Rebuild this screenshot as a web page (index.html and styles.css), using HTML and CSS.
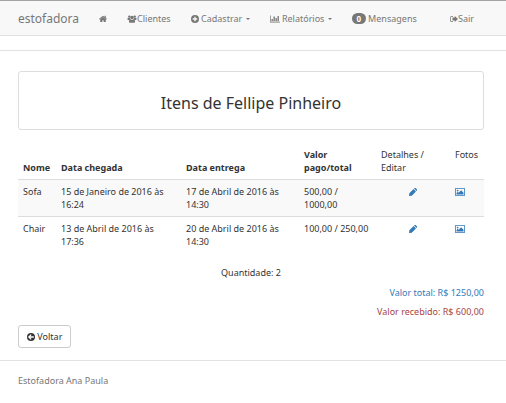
FILE: index.html
```html
<!DOCTYPE html>
<html lang="pt-BR">
<head>
<meta charset="utf-8">
<title>Estofadora</title>
<link rel="stylesheet" href="styles.css">
</head>
<body>
<svg class="sprite" aria-hidden="true">
  <symbol id="home" viewBox="70 160 1650 1500"><path d="M1472 992v480q0 26-19 45t-45 19h-384v-384h-256v384h-384q-26 0-45-19t-19-45v-480q0-1 .5-3t.5-3l575-474 575 474q1 2 1 6zm223-69l-62 74q-8 9-21 11h-3q-13 0-21-7l-692-577-692 577q-12 8-24 7-13-2-21-11l-62-74q-8-10-7-23.5t11-21.5l719-599q32-26 76-26t76 26l244 204v-195q0-14 9-23t23-9h192q14 0 23 9t9 23v408l219 182q10 8 11 21.5t-7 23.5z"/></symbol>
  <symbol id="users" viewBox="0 0 20 18"><circle cx="4" cy="3.6" r="2.7"/><circle cx="16" cy="3.6" r="2.7"/><circle cx="10" cy="5.6" r="3.9"/><path d="M0 10V8.500Q0 5.500 1.500 5.500Q4 7.500 5.600 6.500Q5.500 8.500 6.500 9.800Q4.500 10 3.500 11.300H1.600Q0 11.300 0 10zM20 10V8.500Q20 5.500 18.500 5.500Q16 7.500 14.400 6.500Q14.500 8.500 13.500 9.800Q15.500 10 16.500 11.300H18.400Q20 11.300 20 10zM6.500 9.500Q10 12 13.500 9.500Q17 9.500 17 15Q17 17.500 14.500 17.500H5.500Q3 17.500 3 15Q3 9.500 6.500 9.500z"/></symbol>
  <symbol id="plus" viewBox="1 1 14 14"><path fill-rule="evenodd" d="M8 1a7 7 0 1 0 0 14A7 7 0 0 0 8 1zM6.800 4h2.400v2.800H12v2.400H9.200V12H6.800V9.200H4V6.800h2.800z"/></symbol>
  <symbol id="chart" viewBox="0 0 20 16"><path d="M0 1h1.400v12.600H20V15H0zM3 8h2.700v4.500H3zM7 3h2.700v9.500H7zM11 6h2.700v6.500H11zM15 2h2.700v10.500H15z"/></symbol>
  <symbol id="exit" viewBox="0 1 16 14"><path d="M6 2v1.400H3.300Q1.700 3.400 1.700 5v6Q1.700 12.600 3.300 12.600H6V14H3.200Q.3 14 .3 11V5Q.3 2 3.200 2zM9.500 2L16 8 9.500 14V10.800H5V5.200h4.500z"/></symbol>
  <symbol id="pencil" viewBox="1 1 14 14"><path d="M1 15l.6-4.800 7.400-7.400 4.200 4.200-7.400 7.400zM9.900 2l.8-.8q1-.8 1.900 0l2.200 2.200q.8.900 0 1.900l-.8.800z"/></symbol>
  <symbol id="image" viewBox="0 0 20 16"><path fill-rule="evenodd" d="M1.500 0h17Q20 0 20 1.500v13Q20 16 18.500 16h-17Q0 16 0 14.500v-13Q0 0 1.500 0zM1.600 1.600v12.800h16.800V1.600z"/><circle cx="5.200" cy="5.200" r="1.800"/><path d="M3 13V10.200l2.500-2.500L7.300 9.500l4.900-4.900 4.800 4.700V13z"/></symbol>
  <symbol id="back" viewBox="1 1 14 14"><path fill-rule="evenodd" d="M8 1a7 7 0 1 0 0 14A7 7 0 0 0 8 1zM2.600 8l4.900-4.800 1.500 1.500-2.100 2.200h6v2.200h-6L9 11.300l-1.500 1.500z"/></symbol>
</svg>

<nav class="navbar">
  <a class="brand" href="#">estofadora</a>
  <a class="nav-link" href="#" aria-label="Início"><svg class="icon"><use href="#home"/></svg></a>
  <a class="nav-link" href="#"><svg class="icon wide"><use href="#users"/></svg>Clientes</a>
  <a class="nav-link" href="#"><svg class="icon"><use href="#plus"/></svg>&nbsp;Cadastrar <span class="caret"></span></a>
  <a class="nav-link" href="#"><svg class="icon wide"><use href="#chart"/></svg>&nbsp;Relatórios <span class="caret"></span></a>
  <a class="nav-link" href="#"><span class="badge">0</span>&nbsp;Mensagens</a>
  <a class="nav-link right" href="#"><svg class="icon"><use href="#exit"/></svg>Sair</a>
</nav>
<hr class="rule">

<main class="container">
  <header class="well"><h1>Itens de Fellipe Pinheiro</h1></header>

  <table class="items">
    <colgroup><col class="c-name"><col class="c-in"><col class="c-out"><col class="c-value"><col class="c-edit"><col class="c-photo"></colgroup>
    <thead>
      <tr><th>Nome</th><th>Data chegada</th><th>Data entrega</th><th>Valor pago/total</th><td>Detalhes / Editar</td><td>Fotos</td></tr>
    </thead>
    <tbody>
      <tr>
        <td>Sofa</td><td>15 de Janeiro de 2016 às 16:24</td><td>17 de Abril de 2016 às 14:30</td><td>500,00 / 1000,00</td>
        <td class="center"><a href="#" aria-label="Editar"><svg class="icon"><use href="#pencil"/></svg></a></td>
        <td><a href="#" aria-label="Fotos"><svg class="icon wide"><use href="#image"/></svg></a></td>
      </tr>
      <tr>
        <td>Chair</td><td>13 de Abril de 2016 às 17:36</td><td>20 de Abril de 2016 às 14:30</td><td>100,00 / 250,00</td>
        <td class="center"><a href="#" aria-label="Editar"><svg class="icon"><use href="#pencil"/></svg></a></td>
        <td><a href="#" aria-label="Fotos"><svg class="icon wide"><use href="#image"/></svg></a></td>
      </tr>
    </tbody>
  </table>

  <p class="count">Quantidade: 2</p>
  <p class="sum total">Valor total: R$ 1250,00</p>
  <p class="sum received">Valor recebido: R$ 600,00</p>
  <button class="btn" type="button"><svg class="icon"><use href="#back"/></svg> Voltar</button>
</main>

<footer class="footer">Estofadora Ana Paula</footer>
</body>
</html>
```
FILE: styles.css
```css
* { box-sizing: border-box; }

body {
  margin: 0;
  background: #fff;
  color: #333;
  font: 9px/13px "Noto Sans", sans-serif;
}

a { color: #337ab7; text-decoration: none; }
p { margin: 0; }
.sprite { display: none; }

.icon {
  width: 8px;
  height: 8px;
  fill: currentColor;
  vertical-align: -1px;
}
.icon.wide { width: 10px; }

.navbar {
  display: flex;
  align-items: center;
  height: 36px;
  padding: 0 22px 0 8px;
  border-top: 1px solid #a3a3a3;
  border-bottom: 1px solid #e2e2e2;
  background: #f8f8f8;
  white-space: nowrap;
}
.navbar a { padding: 0 10px; color: #777; }
.navbar .brand { font-size: 12px; }
.navbar .right { margin-left: auto; }

.caret {
  display: inline-block;
  margin-left: 1px;
  border: 2px solid transparent;
  border-top-color: currentColor;
  border-bottom: 0;
  vertical-align: middle;
}

.badge {
  display: inline-block;
  min-width: 14px;
  padding: 0 4px;
  border-radius: 6px;
  background: #777;
  color: #fff;
  font-size: 8px;
  font-weight: 700;
  line-height: 11px;
  text-align: center;
}

.rule {
  margin: 14px 0 20px;
  border: 0;
  border-top: 1px solid #e2e2e2;
}

.container { padding: 0 22px 0 18px; }

.well {
  margin-bottom: 13px;
  padding: 21px 20px 16px;
  border: 1px solid #ddd;
  border-radius: 3px;
  text-align: center;
}
.well h1 {
  margin: 0;
  font-size: 16px;
  font-weight: 400;
  line-height: 20px;
}

.items {
  width: 100%;
  border-collapse: collapse;
  table-layout: fixed;
}
.items th, .items td {
  padding: 5px;
  text-align: left;
  vertical-align: top;
}
.items th { vertical-align: bottom; }
.items tbody tr { border-top: 1px solid #ddd; }
.items tbody tr:nth-child(odd) { background: #f9f9f9; }
.items .center { text-align: center; }
.c-name { width: 38px; }
.c-in { width: 125px; }
.c-out { width: 118px; }
.c-value { width: 77px; }
.c-edit { width: 74px; }
.c-photo { width: 34px; }

.count { margin: 13px 0 7px; text-align: center; }
.sum { margin-bottom: 6px; text-align: right; }
.total { color: #337ab7; }
.received { color: #a94442; }

.btn {
  display: block;
  margin-top: 7px;
  padding: 4px 8px;
  border: 1px solid #ccc;
  border-radius: 3px;
  background: #fff;
  color: #333;
  font: inherit;
}

.footer {
  margin-top: 12px;
  padding: 13px 18px;
  border-top: 1px solid #e2e2e2;
  color: #777;
}
```
